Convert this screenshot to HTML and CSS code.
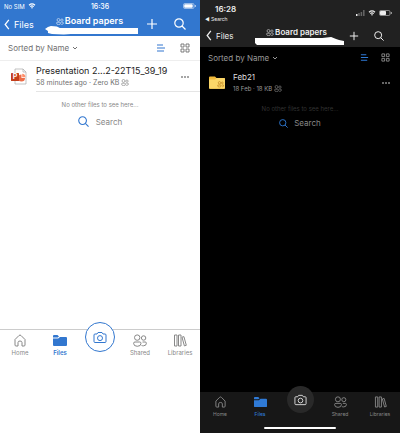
FILE: index.html
```
<!DOCTYPE html>
<html lang="en">
<head>
<meta charset="UTF-8">
<meta name="viewport" content="width=device-width, initial-scale=1.0">
<title>Board papers</title>
<link rel="stylesheet" href="styles.css">
</head>
<body>

<!-- Shared icons -->
<svg class="sprite" aria-hidden="true">
    <symbol id="back" viewBox="0 0 6 12"><path d="M5 1 1 6l4 5" stroke-width="1.4"/></symbol>
    <symbol id="plus" viewBox="0 0 12 12"><path d="M6 1v10M1 6h10"/></symbol>
    <symbol id="search" viewBox="0 0 12 12"><circle cx="5" cy="5" r="4.2"/><path d="m8 8 3.500 3.500"/></symbol>
    <symbol id="down" viewBox="0 0 6 6"><path d="m1 2 2 2 2-2"/></symbol>
    <symbol id="lines" viewBox="0 0 10 10"><path d="M1 2h6M1 5h8M1 8h7" stroke-width="1.2"/></symbol>
    <symbol id="tiles" viewBox="0 0 10 10"><path d="M1 1h3v3H1zM6 1h3v3H6zM1 6h3v3H1zM6 6h3v3H6z" stroke-width=".9"/></symbol>
    <symbol id="people" viewBox="0 0 14 13"><circle cx="4.200" cy="3.600" r="2.700"/><circle cx="10.600" cy="4" r="2.200"/><path d="M2 8h4.700q1.300 0 1.300 1.300 0 3-3.700 3t-3.700-3Q.6 8 2 8zM9.500 8h2.700q1.200 0 1.200 1.200 0 2.600-3 2.600-1 0-1.900-.4"/></symbol>
    <symbol id="home" viewBox="0 0 12 13"><path d="M1 5.500 5 1.500q1-1 2 0l4 4V11q0 1-1 1H8V8.500Q8 7 6 7T4 8.500V12H2q-1 0-1-1z"/></symbol>
    <symbol id="folder" viewBox="0 0 14 12"><path class="solid" d="M0 3V1.500Q0 .5 1 .5h3.500L6 2 4.800 3zM0 4h5.200L7 2.500h6q1 0 1 1V10.500q0 1-1 1H1q-1 0-1-1z"/></symbol>
    <symbol id="camera" viewBox="0 0 14 12"><path d="M1 3.500q0-1 1-1h2L5 1h4l1 1.500h2q1 0 1 1V10q0 1-1 1H2q-1 0-1-1z"/><circle cx="7" cy="6.600" r="2.500"/></symbol>
    <symbol id="books" viewBox="0 0 14 13"><path d="M1.500 1h2.500v11H1.500zM5.500 1H8v11H5.500zM9 3.200l1.900-.6L13.300 11.300l-1.900.6z" stroke-linejoin="round"/></symbol>
    <symbol id="wifi" viewBox="0 0 10 8"><path d="M1 3q4-3.500 8 0M2.700 4.900q2.300-2 4.600 0" stroke-width="1.500"/><path class="solid" d="M3.500 6Q5 5 6.500 6L5 7.600z"/></symbol>
    <symbol id="battery" viewBox="0 0 13 6"><rect x=".5" y=".5" width="10.500" height="5" rx="1.300" stroke-width=".5"/><path d="M12.300 2v2" stroke-width=".7"/></symbol>
</svg>

<div class="screens">
    <section class="phone light">
        <header>
            <div class="status">
                <span class="carrier">No SIM <svg class="wifi"><use href="#wifi"/></svg></span>
                <span class="clock">16:36</span>
                <svg class="battery" viewBox="0 0 13 6"><use href="#battery"/><rect class="solid" x="1.200" y="1.200" width="8.500" height="3.600" rx=".7"/></svg>
            </div>
            <nav class="navbar">
                <button class="back"><svg><use href="#back"/></svg>Files</button>
                <div class="title">
                    <h1><svg class="shared"><use href="#people"/></svg>Board papers</h1>
                    <svg class="scribble" viewBox="0 0 94 9" preserveAspectRatio="none"><path d="M0 3 3 1l3-1 6 .5L15 2h79v6H26l-7 .5L7 8 3 7 3 5z"/></svg>
                </div>
                <button aria-label="Add"><svg class="action"><use href="#plus"/></svg></button>
                <button aria-label="Search"><svg class="action"><use href="#search"/></svg></button>
            </nav>
        </header>

        <div class="sortbar">
            <button class="sort">Sorted by Name <svg><use href="#down"/></svg></button>
            <button class="view active" aria-label="List"><svg><use href="#lines"/></svg></button>
            <button class="view" aria-label="Tiles"><svg><use href="#tiles"/></svg></button>
        </div>

        <main>
            <div class="file">
                <svg class="thumb" viewBox="0 0 16 17">
                    <path d="M4 1h8l3 3v12H4z" fill="#fff" stroke="#aaa" stroke-width=".7"/>
                    <path d="M12 1v3h3" stroke="#aaa" stroke-width=".7"/>
                    <path d="M10.500 6.500v3.500H14a3.500 3.500 0 1 1-3.500-3.500z" fill="#ed6c47"/>
                    <path d="M11.200 5.800a3.500 3.500 0 0 1 3.300 3.400h-3.300z" fill="#ff8f6b"/>
                    <rect y="5" width="8" height="8" rx=".6" fill="#c43e1c"/>
                    <text x="4" y="11.400" text-anchor="middle">P</text>
                </svg>
                <div class="details">
                    <h2>Presentation 2...2-22T15_39_19</h2>
                    <p>58 minutes ago · Zero KB <svg class="shared"><use href="#people"/></svg></p>
                </div>
                <button class="more" aria-label="More"><i></i><i></i><i></i></button>
            </div>
            <p class="empty">No other files to see here...</p>
            <button class="find"><svg><use href="#search"/></svg>Search</button>
        </main>

        <nav class="tabs">
            <a href="#"><svg><use href="#home"/></svg>Home</a>
            <a href="#" class="active"><svg><use href="#folder"/></svg>Files</a>
            <button class="camera" aria-label="Camera"><svg><use href="#camera"/></svg></button>
            <a href="#"><svg><use href="#people"/></svg>Shared</a>
            <a href="#"><svg><use href="#books"/></svg>Libraries</a>
        </nav>
    </section>

    <section class="phone dark">
        <header>
            <div class="status">
                <div class="time">
                    <span class="clock">16:28</span>
                    <a href="#" class="return">◀ Search</a>
                </div>
                <div class="signals">
                    <svg class="bars" viewBox="0 0 9 6"><path class="solid" d="M0 4h1.500v2H0z"/><path d="M3 6V3M5.400 6V2M7.800 6V0" stroke="#666" stroke-width="1.500"/></svg>
                    <svg class="wifi"><use href="#wifi"/></svg>
                    <svg class="battery" viewBox="0 0 13 6"><use href="#battery"/><rect class="solid" x="1" y="1" width="6" height="4" rx=".7"/></svg>
                </div>
            </div>
            <nav class="navbar">
                <button class="back"><svg><use href="#back"/></svg>Files</button>
                <div class="title">
                    <h1><svg class="shared"><use href="#people"/></svg>Board papers</h1>
                    <svg class="scribble" viewBox="0 0 90 8" preserveAspectRatio="none"><path d="M0 1h68l9-1 5 2 3 1 5 1v4H2L0 6z"/></svg>
                </div>
                <button aria-label="Add"><svg class="action"><use href="#plus"/></svg></button>
                <button aria-label="Search"><svg class="action"><use href="#search"/></svg></button>
            </nav>
        </header>

        <div class="sortbar">
            <button class="sort">Sorted by Name <svg><use href="#down"/></svg></button>
            <button class="view active" aria-label="List"><svg><use href="#lines"/></svg></button>
            <button class="view" aria-label="Tiles"><svg><use href="#tiles"/></svg></button>
        </div>

        <main>
            <div class="file">
                <svg class="thumb" viewBox="0 0 16 13">
                    <path d="M0 1.500Q0 .5 1 .5h5L7.500 2H15q1 0 1 1v9q0 .8-1 .8H1q-1 0-1-1z" fill="#f0b93a"/>
                    <path d="M0 3.600h6L7.600 2H15q1 0 1 1v9q0 .8-1 .8H1q-1 0-1-1z" fill="#fbd668"/>
                    <g stroke="#b57918" stroke-width=".6"><circle cx="10.500" cy="6.800" r="1.200"/><circle cx="13.300" cy="6.900" r=".9"/><path d="M8.800 9h3.300v1q0 1-1.700 1t-1.600-1zM13 9h1.500v1q0 .8-1.200.8"/></g>
                </svg>
                <div class="details">
                    <h2>Feb21</h2>
                    <p>18 Feb · 18 KB <svg class="shared"><use href="#people"/></svg></p>
                </div>
                <button class="more" aria-label="More"><i></i><i></i><i></i></button>
            </div>
            <p class="empty">No other files to see here...</p>
            <button class="find"><svg><use href="#search"/></svg>Search</button>
        </main>

        <nav class="tabs">
            <a href="#"><svg><use href="#home"/></svg>Home</a>
            <a href="#" class="active"><svg><use href="#folder"/></svg>Files</a>
            <button class="camera" aria-label="Camera"><svg><use href="#camera"/></svg></button>
            <a href="#"><svg><use href="#people"/></svg>Shared</a>
            <a href="#"><svg><use href="#books"/></svg>Libraries</a>
        </nav>
        <div class="homebar"></div>
    </section>
</div>

</body>
</html>
```
FILE: styles.css
```
* { box-sizing: border-box; }
body { margin: 0; font-family: Inter, "Liberation Sans", sans-serif; background: #fff; }
h1, h2, p { margin: 0; font-weight: 400; }
button { border: 0; padding: 0; background: none; color: inherit; font: inherit; cursor: pointer; }
a { color: inherit; text-decoration: none; }
svg { display: block; flex: none; fill: none; stroke: currentColor; stroke-width: 1; overflow: visible; }
.sprite { position: absolute; width: 0; height: 0; }
.solid { fill: currentColor; stroke: none; }

.screens { display: grid; grid-template-columns: 1fr 1fr; min-height: 100vh; }
.phone { display: flex; flex-direction: column; min-width: 0; white-space: nowrap; }
.light { --accent: #3277cf; --muted: #707070; --icon: #888; background: #fff; color: #222; padding-bottom: 73px; }
.dark { --accent: #2f7ad6; --muted: #999; --icon: #888; background: #000; color: #ddd; }

/* Header */
header { color: #fff; background: #3277cf; }
.dark header { background: #212121; color: #eee; }
.status { display: grid; grid-template-columns: 1fr auto 1fr; align-items: center; height: 12px; padding: 0 4px; font-size: 6px; }
.carrier { display: flex; align-items: center; gap: 3px; }
.wifi { width: 8px; height: 6px; }
.battery { width: 13px; height: 6px; justify-self: end; }
.light .clock { font-size: 7px; font-weight: 500; }
.dark .status { display: flex; justify-content: space-between; height: 24px; padding: 2px 8px 0 5px; }
.time { display: flex; flex-direction: column; }
.dark .clock { padding-left: 10px; font-size: 8px; font-weight: 600; line-height: 12px; }
.return { font-size: 5px; line-height: 8px; }
.signals { display: flex; gap: 3px; }
.bars { width: 9px; height: 6px; }
.navbar { display: grid; grid-template-columns: 41px 1fr 28px 28px; align-items: center; height: 24px; padding: 0 6px 0 4px; }
.dark .navbar { grid-template-columns: 49px 1fr 20px 30px; height: 23px; padding: 0 6px; }
.navbar button { display: flex; justify-content: center; }
.navbar .back { justify-content: flex-start; align-items: center; gap: 4px; font-size: 9px; }
.dark .navbar .back { font-size: 8px; }
.back svg { width: 6px; height: 11px; }
.action { width: 12px; height: 12px; stroke-width: 1.2; }
.dark .action { width: 10px; height: 10px; }
.title { align-self: end; padding-bottom: 1px; }
.title h1 { display: flex; justify-content: center; align-items: center; gap: 1px; padding-right: 4px; font-size: 9px; font-weight: 600; line-height: 10px; }
.dark .title { padding-bottom: 2px; }
.dark .title h1 { padding-right: 6px; font-size: 8px; }
.shared { width: 8px; height: 7px; }
.scribble { width: 100%; height: 9px; }
.dark .scribble { height: 8px; }
.scribble path { fill: #fff; stroke: none; }

/* Sorting */
.sortbar { display: flex; align-items: center; height: 24px; padding: 0 10px 0 8px; color: var(--muted); font-size: 8px; }
.sort { display: flex; align-items: center; gap: 3px; margin-right: auto; }
.sort svg { width: 6px; height: 6px; }
.view { margin-left: 14px; }
.view svg { width: 10px; height: 10px; }
.view.active { color: var(--accent); }
.dark .sortbar { height: 21px; }
.dark .view { margin-left: 12px; }
.dark .view svg { width: 9px; height: 9px; }

/* File list */
main { display: flex; flex: 1; flex-direction: column; align-items: center; }
.light main { border-top: 1px solid #eee; }
.file { display: flex; align-items: center; align-self: stretch; height: 31px; padding: 0 11px; }
.dark .file { height: 29px; padding: 0 10px 0 9px; }
.thumb { width: 16px; height: 17px; stroke: none; }
.thumb text { fill: #fff; font-size: 7px; font-weight: 700; }
.details { display: flex; flex: 1; flex-direction: column; justify-content: center; align-self: stretch; margin-left: 9px; }
.light .details { margin-right: -21px; border-bottom: 1px solid #e5e5e5; }
.dark .details { margin-left: 8px; }
.file h2 { font-size: 9px; line-height: 13px; }
.dark .file h2 { font-size: 8px; line-height: 12px; }
.file p { display: flex; align-items: center; gap: 2px; color: var(--muted); font-size: 7px; line-height: 11px; }
.dark .file p { font-size: 6px; }
.more { display: flex; gap: 1px; }
.more i { width: 2px; height: 2px; border-radius: 50%; background: var(--icon); }
.empty { margin-top: 7px; color: #888; font-size: 6px; line-height: 12px; }
.dark .empty { margin-top: 6px; color: #333; }
.find { display: flex; align-items: center; gap: 7px; margin-top: 5px; color: #888; font-size: 8px; line-height: 10px; }
.dark .find { gap: 6px; margin-top: 3px; }
.find svg { width: 11px; height: 11px; color: var(--accent); stroke-width: 1.2; }
.dark .find svg { width: 9px; height: 9px; }

/* Bottom tabs */
.tabs { display: grid; grid-template-columns: repeat(5, 1fr); height: 31px; padding-top: 4px; border-top: 1px solid #ccc; color: var(--icon); font-size: 6px; }
.tabs a { display: flex; flex-direction: column; align-items: center; gap: 2px; line-height: 8px; }
.tabs svg { width: 14px; height: 13px; }
.tabs .active { color: var(--accent); font-weight: 600; }
.camera { display: grid; place-items: center; justify-self: center; width: 30px; height: 30px; margin-top: -12px; border: 1px solid var(--accent); border-radius: 50%; background: #fff; color: var(--accent); }
.dark .tabs { height: 33px; border: 0; background: #171717; font-size: 5px; }
.dark .tabs svg { width: 13px; height: 12px; }
.dark .tabs .active { font-weight: 500; }
.dark .camera { width: 27px; height: 27px; margin-top: -10px; border: 0; background: #292929; color: #ddd; }
.homebar { display: grid; justify-content: center; height: 8px; padding-top: 2px; background: #171717; }
.homebar::before { content: ""; width: 72px; height: 2px; border-radius: 1px; background: #fff; }
```
